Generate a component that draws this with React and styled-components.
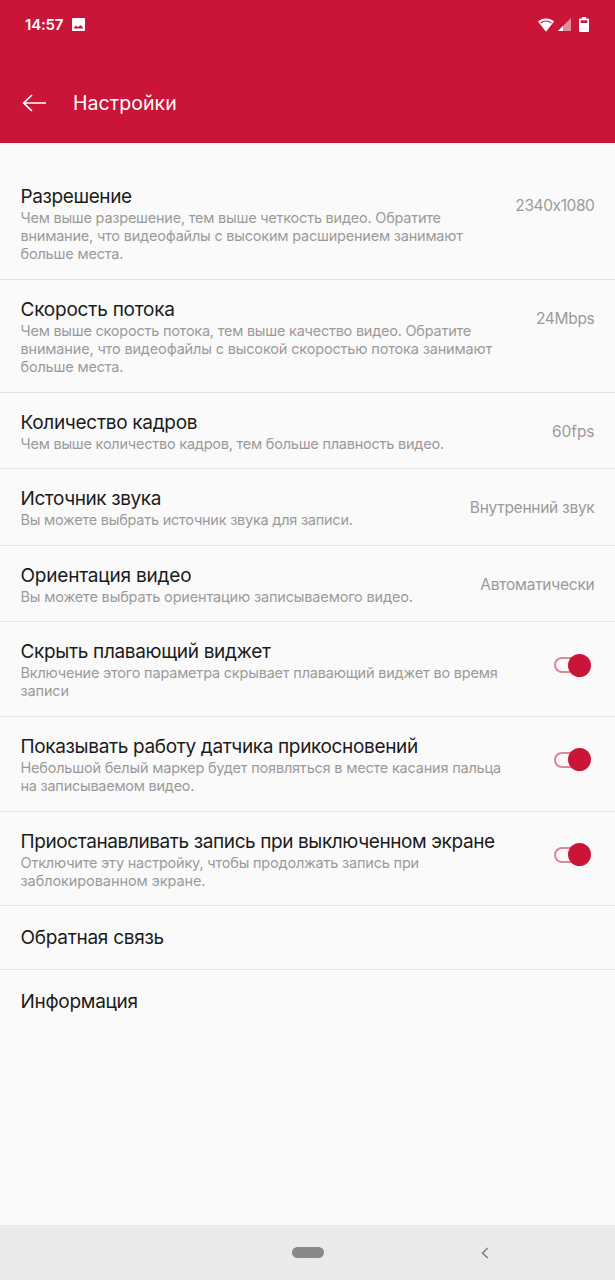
// external dependencies
import React from 'react';
import styled, {createGlobalStyle} from 'styled-components';

const RED = '#cb1538';

const GlobalStyle = createGlobalStyle`
  * {
    box-sizing: border-box;
  }

  body {
    background-color: #fafafa;
    font-family: Inter, "Noto Sans", sans-serif;
    font-feature-settings: "calt" 0;
    margin: 0;
  }
`;

/**
 * @function getSpacing
 *
 * @description
 * get the letter-spacing value for a text component
 *
 * @param {number} $spacing the tracking in pixels
 * @returns {string} the letter-spacing CSS value
 */
const getSpacing = ({$spacing = 0}) => `${$spacing}px`;

const Screen = styled.div`
  display: flex;
  flex-direction: column;
  height: 1280px;
  overflow: hidden;
  width: 615px;
`;

const Header = styled.header`
  background-color: ${RED};
  color: #fff;
  flex: 0 0 143px;
`;

const StatusBar = styled.div`
  align-items: center;
  display: flex;
  height: 49px;
  padding: 0 26px 0 25px;
`;

const Time = styled.span`
  align-items: center;
  display: flex;
  font-size: 15px;
  font-weight: 600;
  gap: 9px;
  letter-spacing: -0.2px;
  margin-right: auto;
`;

const StatusIcons = styled.div`
  align-items: center;
  display: flex;
  gap: 4px;
`;

const BatteryIcon = styled.svg`
  margin-left: 4px;
`;

const Toolbar = styled.div`
  align-items: center;
  display: flex;
  gap: 26px;
  height: 94px;
  padding: 13px 22px 0;
`;

const PageTitle = styled.h1`
  font-size: 19.5px;
  font-weight: 400;
  letter-spacing: 0.07px;
  margin: 0;
`;

const List = styled.main`
  flex: 1;
  padding-top: 23.8px;
`;

const Row = styled.section`
  border-bottom: ${({$last}) => ($last ? '0' : '1px solid #e4e4e4')};
  display: flex;
  justify-content: space-between;
  padding: 18px 20.5px 15.3px;
`;

const LinkRow = styled(Row)`
  padding: 20px 20.5px 18.5px;
`;

const Title = styled.h2`
  color: #1b1b1b;
  font-size: 19px;
  font-weight: 400;
  letter-spacing: ${getSpacing};
  line-height: 24px;
  margin: 0;
  white-space: nowrap;
`;

const Line = styled.div`
  color: #9a9a9a;
  font-size: 14.5px;
  letter-spacing: ${getSpacing};
  line-height: 18.2px;
  white-space: nowrap;
`;

const Value = styled.div`
  color: #9a9a9a;
  font-size: 15.5px;
  letter-spacing: ${getSpacing};
  line-height: 20px;
  margin-top: 11px;
  white-space: nowrap;
`;

const Toggle = styled.span`
  align-items: center;
  display: flex;
  height: 24px;
  margin: 13px 3.5px 0 0;
`;

const Track = styled.span`
  border: 2px solid #df8798;
  border-radius: 8px 0 0 8px;
  border-right: 0;
  height: 16px;
  width: 18.5px;
`;

const Thumb = styled.span`
  background-color: ${RED};
  border-radius: 50%;
  height: 23px;
  margin-left: -4px;
  width: 23px;
`;

const NavBar = styled.nav`
  align-items: center;
  background-color: #eaeaea;
  display: grid;
  flex: 0 0 55px;
  grid-template-columns: 1fr 32px 1fr;
`;

const HomePill = styled.span`
  background-color: #888;
  border-radius: 6px;
  grid-column: 2;
  height: 11px;
  width: 32px;
`;

const BackChevron = styled.svg`
  margin-left: 157px;
`;

// each text is paired with its tracking
const SETTINGS = [
  {
    title: ['Разрешение', -0.4],
    lines: [
      ['Чем выше разрешение, тем выше четкость видео. Обратите', -0.23],
      ['внимание, что видеофайлы с высоким расширением занимают', -0.21],
      ['больше места.', -0.18]
    ],
    value: ['2340x1080', -0.4]
  },
  {
    title: ['Скорость потока', -0.22],
    lines: [
      ['Чем выше скорость потока, тем выше качество видео. Обратите', -0.24],
      ['внимание, что видеофайлы с высокой скоростью потока занимают', -0.16],
      ['больше места.', -0.18]
    ],
    value: ['24Mbps', -0.3]
  },
  {
    title: ['Количество кадров', -0.3],
    lines: [['Чем выше количество кадров, тем больше плавность видео.', -0.23]],
    value: ['60fps', -0.05]
  },
  {
    title: ['Источник звука', -0.41],
    lines: [['Вы можете выбрать источник звука для записи.', -0.24]],
    value: ['Внутренний звук', -0.27]
  },
  {
    title: ['Ориентация видео', -0.2],
    lines: [['Вы можете выбрать ориентацию записываемого видео.', -0.16]],
    value: ['Автоматически', -0.24]
  },
  {
    title: ['Скрыть плавающий виджет', -0.33],
    lines: [
      ['Включение этого параметра скрывает плавающий виджет во время', -0.2],
      ['записи', -0.15]
    ]
  },
  {
    title: ['Показывать работу датчика прикосновений', -0.35],
    lines: [
      ['Небольшой белый маркер будет появляться в месте касания пальца', -0.2],
      ['на записываемом видео.', -0.25]
    ]
  },
  {
    title: ['Приостанавливать запись при выключенном экране', -0.4],
    lines: [
      ['Отключите эту настройку, чтобы продолжать запись при', -0.2],
      ['заблокированном экране.', -0.08]
    ]
  }
];

const Setting = ({lines, title, value}) => (
  <Row>
    <div>
      <Title $spacing={title[1]}>{title[0]}</Title>
      {lines.map(([text, spacing]) => (
        <Line
          $spacing={spacing}
          key={text}
        >
          {text}
        </Line>
      ))}
    </div>

    {value ? (
      <Value $spacing={value[1]}>{value[0]}</Value>
    ) : (
      <Toggle>
        <Track />
        <Thumb />
      </Toggle>
    )}
  </Row>
);

const App = () => (
  <Screen>
    <GlobalStyle />

    <Header>
      <StatusBar>
        <Time>
          14:57
          <svg width="13" height="13" viewBox="0 0 13 13">
            <rect width="13" height="13" rx="1" fill="#fff" />
            <path d="M2 10.500V9.500L4.200 7.500 6 9.200 8.300 7 11 9.500V10.500Z" fill={RED} />
          </svg>
        </Time>

        <StatusIcons>
          <svg width="16" height="14" viewBox="0 0 16 14">
            <path d="M0 3.600C4.500-.7 11.500-.7 16 3.600L8 13.800Z" fill="#fff" />
            <path d="M2.600 4.900Q8 1.100 13.400 4.900" fill="none" stroke={RED} strokeWidth="1.200" />
          </svg>
          <svg width="13" height="13" viewBox="0 0 13 13">
            <path d="M13 0V13H0Z" fill="#e58a9c" />
            <path d="M5 8V13H0Z" fill="#fff" />
          </svg>
          <BatteryIcon width="10" height="15" viewBox="0 0 10 15">
            <path d="M3 0H7V1.500H9Q10 1.500 10 2.500V14Q10 15 9 15H1Q0 15 0 14V2.500Q0 1.500 1 1.500H3Z" fill="#fff" />
            <path d="M1.700 3.300H8.300V6H1.700Z" fill={RED} />
          </BatteryIcon>
        </StatusIcons>
      </StatusBar>

      <Toolbar>
        <svg width="25" height="18" viewBox="0 0 25 18" fill="none" stroke="#fff" strokeWidth="1.700">
          <path d="M10 1 1.700 9 10 17M1.700 9H24" />
        </svg>
        <PageTitle>Настройки</PageTitle>
      </Toolbar>
    </Header>

    <List>
      {SETTINGS.map((setting) => (
        <Setting
          key={setting.title[0]}
          {...setting}
        />
      ))}

      <LinkRow>
        <Title $spacing={-0.28}>Обратная связь</Title>
      </LinkRow>
      <LinkRow $last>
        <Title $spacing={-0.28}>Информация</Title>
      </LinkRow>
    </List>

    <NavBar>
      <HomePill />
      <BackChevron width="8" height="12" viewBox="0 0 8 12" fill="none" stroke="#808080" strokeWidth="1.600">
        <path d="M6.800 1 1.500 6 6.800 11" />
      </BackChevron>
    </NavBar>
  </Screen>
);

export default App;
